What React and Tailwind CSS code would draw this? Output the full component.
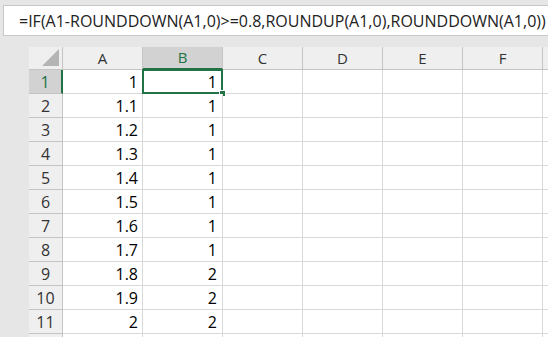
import React from 'react';

const cols = ['A', 'B', 'C', 'D', 'E', 'F', ''];
const rows = [
  ['1', '1'],
  ['1.1', '1'],
  ['1.2', '1'],
  ['1.3', '1'],
  ['1.4', '1'],
  ['1.5', '1'],
  ['1.6', '1'],
  ['1.7', '1'],
  ['1.8', '2'],
  ['1.9', '2'],
  ['2', '2'],
  ['', ''],
];

const font = { fontFamily: '"Open Sans", "Noto Sans", sans-serif' };

const App = () => {
  return (
    <div className="w-[548px] h-[337px] bg-[#e6e6e6] overflow-hidden" style={font}>
      <div className="pt-[5px] pl-[3px]">
        <div className="h-[31px] bg-white border border-[#c8c8c8] border-r-0 flex items-center pl-[15px] text-[16px] text-[#222] whitespace-nowrap">
          =IF(A1-ROUNDDOWN(A1,0)&gt;=0.8,ROUNDUP(A1,0),ROUNDDOWN(A1,0))
        </div>
      </div>

      <div className="mt-[11px] ml-[29px] grid grid-cols-[34px_80px_80px_80px_80px_80px_80px_40px]">
        {/* column headers */}
        <div className="h-[23px] bg-[#efefef] border-r border-b border-[#c4c4c4] relative">
          <div className="absolute right-[3px] bottom-[3px] w-0 h-0 border-l-[17px] border-l-transparent border-b-[17px] border-b-[#b4b4b4]" />
        </div>
        {cols.map((c, j) => (
          <div
            key={j}
            className={
              c === 'B'
                ? 'h-[23px] bg-[#d2d2d2] border-r border-b-2 border-[#c4c4c4] border-b-[#217346] flex items-center justify-center text-[15px] text-[#217346]'
                : 'h-[23px] bg-[#efefef] border-r border-b border-[#c4c4c4] flex items-center justify-center text-[15px] text-[#333]'
            }
          >
            {c}
          </div>
        ))}

        {rows.map((r, i) => (
          <React.Fragment key={i}>
            <div
              className={
                i === 0
                  ? 'h-[24px] bg-[#d2d2d2] border-b border-[#c4c4c4] border-r-2 border-r-[#217346] flex items-center justify-center text-[16px] text-[#217346]'
                  : 'h-[24px] bg-[#efefef] border-b border-r border-[#c4c4c4] flex items-center justify-center text-[16px] text-[#333]'
              }
            >
              {i < 11 ? i + 1 : ''}
            </div>
            <div className="h-[24px] bg-white border-b border-r border-[#d9d9d9] flex items-center justify-end pr-[4px] text-[16px] text-black">
              {r[0]}
            </div>
            <div className="h-[24px] bg-white border-b border-r border-[#d9d9d9] flex items-center justify-end pr-[5px] text-[16px] text-black relative">
              {r[1]}
              {i === 0 && (
                <>
                  <div className="absolute -left-[1px] -top-[1px] -right-[1px] -bottom-[1px] border-2 border-[#217346]" />
                  <div className="absolute -right-[4px] -bottom-[4px] w-[7px] h-[7px] bg-[#217346] border border-white" />
                </>
              )}
            </div>
            {cols.slice(2).map((c, j) => (
              <div key={j} className="h-[24px] bg-white border-b border-r border-[#d9d9d9]" />
            ))}
          </React.Fragment>
        ))}
      </div>
    </div>
  );
};

export default App;
